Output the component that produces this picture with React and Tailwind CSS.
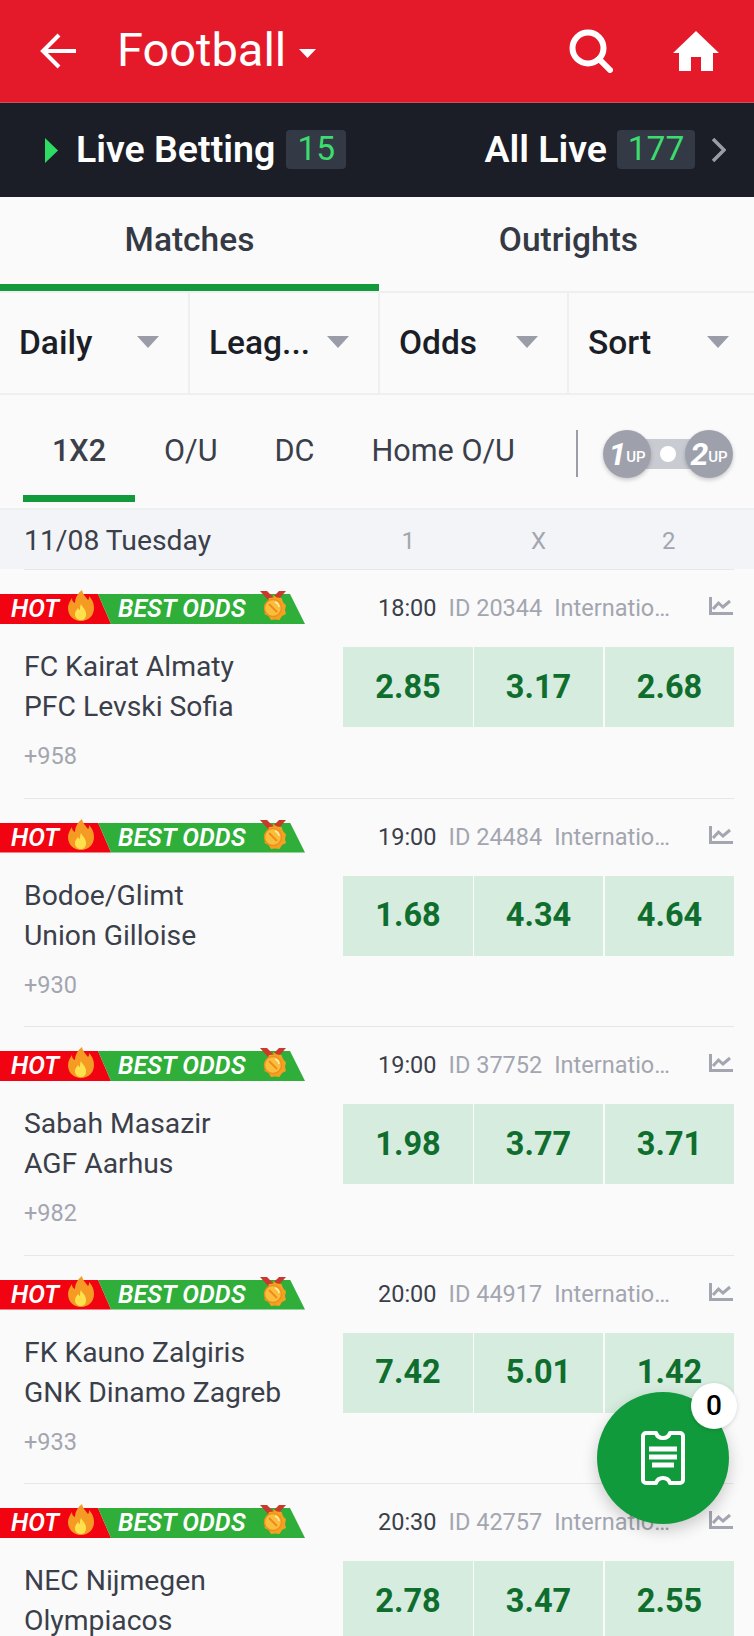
import React from 'react';

const matches = [
  { time: '18:00', id: 'ID 20344', home: 'FC Kairat Almaty', away: 'PFC Levski Sofia', more: '+958', odds: ['2.85', '3.17', '2.68'] },
  { time: '19:00', id: 'ID 24484', home: 'Bodoe/Glimt', away: 'Union Gilloise', more: '+930', odds: ['1.68', '4.34', '4.64'] },
  { time: '19:00', id: 'ID 37752', home: 'Sabah Masazir', away: 'AGF Aarhus', more: '+982', odds: ['1.98', '3.77', '3.71'] },
  { time: '20:00', id: 'ID 44917', home: 'FK Kauno Zalgiris', away: 'GNK Dinamo Zagreb', more: '+933', odds: ['7.42', '5.01', '1.42'] },
  { time: '20:30', id: 'ID 42757', home: 'NEC Nijmegen', away: 'Olympiacos', more: '', odds: ['2.78', '3.47', '2.55'] },
];

function Fire() {
  return (
    <svg viewBox="0 0 26 31" className="w-[26px] h-[31px]">
      <path d="M14 0c1 5 4 7 6 10 1-1 1-2 1-4 3 3 5 7 5 12 0 8-6 13-13 13S0 26 0 18c0-4 2-7 4-10 0 3 1 4 3 5 0-5 3-10 7-13z" fill="#f59a23" />
      <path d="M13 14c1 3 5 5 5 10 0 4-2 6-5 6s-6-2-6-6c0-3 2-4 3-6 1 1 1 2 2 2 0-2 0-4 1-6z" fill="#ffe14d" />
    </svg>
  );
}

function Medal() {
  return (
    <svg viewBox="0 0 28 32" className="w-[28px] h-[32px]">
      <path d="M1 0h7l6 6-4 4zM27 0h-7l-6 6 4 4z" fill="#c9392c" />
      <path d="M14 4l4 2.500 4.500 .5 1.500 4 3 3.500-1 4.500 1 4-4 2-2.500 4-4.500-.5-4 .5-2.500-4-4-2 1-4-1-4.500 3-3.500 1.500-4 4.500-.5z" fill="#f5a020" />
      <circle cx="14" cy="17" r="8.500" fill="#f9bf3c" stroke="#ef8f1e" strokeWidth="1.500" />
      <path d="M10 13l8 8" stroke="#f08a1c" strokeWidth="2" />
      <path d="M16 11a6 6 0 0 1 4 5" stroke="#fdeeb0" strokeWidth="1.500" fill="none" />
    </svg>
  );
}

function Banner() {
  return (
    <div className="relative flex h-[30px] w-[305px] italic font-semibold text-white text-[25px]">
      <div className="w-[111px] bg-[#f20311] pl-[11px] leading-[30px] [clip-path:polygon(0_0,98px_0,100%_100%,0_100%)]">HOT</div>
      <div className="w-[207px] -ml-[13px] bg-[#2fae39] pl-[20px] leading-[30px] whitespace-nowrap [clip-path:polygon(0_0,192px_0,100%_100%,13px_100%)]">BEST ODDS</div>
      <div className="absolute left-[68px] -top-[4px]"><Fire /></div>
      <div className="absolute left-[259px] -top-[3px]"><Medal /></div>
    </div>
  );
}

function MatchRow({ match }) {
  return (
    <div className="h-[228.5px] pt-[24px] ml-[24px] mr-[20px] border-b border-[#e6e7ea]">
      <div className="flex items-center h-[30px] -ml-[24px]">
        <Banner />
        <span className="ml-[73px] text-[23.5px] text-[#3a3f4a]">{match.time}</span>
        <span className="ml-[12px] text-[23.5px] text-[#a3a6b0]">{match.id}</span>
        <span className="ml-[12px] w-[120px] whitespace-nowrap text-[23.5px] text-[#a3a6b0]">Internatio…</span>
        <svg viewBox="0 0 24 18" className="ml-[35px] -mt-[6px] w-[24px] h-[18px]" fill="none" stroke="#a3a6b0" strokeWidth="3">
          <path d="M1.500 0v16.500H24" />
          <path d="M4 12l5.500-6 4.500 4 7-6" />
        </svg>
      </div>
      <div className="flex justify-between mt-[23px]">
        <div className="text-[28.3px] leading-[40px] text-[#3a3f4a]">
          <div>{match.home}</div>
          <div>{match.away}</div>
          <div className="mt-[11px] text-[23.5px] leading-[36px] text-[#a3a6b0]">{match.more}</div>
        </div>
        <div className="flex h-[80px]">
          <div className="w-[130px] flex items-center justify-center bg-[#d6ecdf] text-[#0f6e2d] text-[32.5px] font-bold">{match.odds[0]}</div>
          <div className="w-[129px] ml-[1px] flex items-center justify-center bg-[#d6ecdf] text-[#0f6e2d] text-[32.5px] font-bold">{match.odds[1]}</div>
          <div className="w-[129px] ml-[2px] flex items-center justify-center bg-[#d6ecdf] text-[#0f6e2d] text-[32.5px] font-bold">{match.odds[2]}</div>
        </div>
      </div>
    </div>
  );
}

function FilterCell({ label, last }) {
  return (
    <div className={`flex items-center justify-between pl-[19px] ${last ? 'pr-[25px]' : 'pr-[29px] border-r-2 border-[#eeeff1]'}`}>
      <span className="text-[33.5px] font-medium text-[#1b1e26]">{label}</span>
      <svg viewBox="0 0 22 12" className="w-[22px] h-[12px] -mt-[2px]"><path d="M0 0h22L11 12z" fill="#9a9da8" /></svg>
    </div>
  );
}

export default function App() {
  return (
    <div className="relative h-[1636px] w-[754px] overflow-hidden bg-[#fafafa] font-['Roboto',sans-serif]">
      {/* Header */}
      <header className="flex items-center h-[103px] bg-[#e41a2b] border-b border-[#c9525c] pl-[40px] pr-[35px]">
        <svg viewBox="0 0 36 36" className="w-[36px] h-[36px]" fill="none" stroke="white" strokeWidth="4">
          <path d="M36 18H3M19 2L3 18l16 16" />
        </svg>
        <span className="ml-[41px] -mt-[2px] text-[47px] text-white">Football</span>
        <svg viewBox="0 0 17 9" className="ml-[13px] mt-[5px] w-[17px] h-[9px]"><path d="M0 0h17L8.500 9z" fill="white" /></svg>
        <svg viewBox="0 0 44 44" className="ml-auto w-[44px] h-[44px]" fill="none" stroke="white" strokeWidth="6">
          <circle cx="19" cy="19" r="15.500" />
          <path d="M30 30l11 11" strokeLinecap="round" />
        </svg>
        <svg viewBox="0 0 46 40" className="ml-[60px] w-[46px] h-[40px]" fill="white">
          <path d="M23 0L46 22h-6v18H28V26H18v14H6V22H0z" />
        </svg>
      </header>

      {/* Live bar */}
      <div className="flex items-center h-[94px] bg-[#1b1e26] pl-[45px] pr-[28px]">
        <svg viewBox="0 0 13 25" className="w-[13px] h-[25px]"><path d="M0 0l13 12.500L0 25z" fill="#2fdc63" /></svg>
        <span className="ml-[18px] -mt-[2px] text-[37.5px] font-semibold text-white">Live Betting</span>
        <span className="ml-[11px] -mt-[1px] w-[60px] h-[39px] rounded-[4px] bg-[#333a45] flex items-center justify-center text-[33.5px] text-[#3ddc6e]">15</span>
        <span className="ml-auto -mt-[2px] text-[37.5px] font-semibold text-white">All Live</span>
        <span className="ml-[10px] -mt-[1px] w-[78px] h-[39px] rounded-[4px] bg-[#333a45] flex items-center justify-center text-[33.5px] text-[#3ddc6e]">177</span>
        <svg viewBox="0 0 15 24" className="ml-[16px] w-[15px] h-[24px]" fill="none" stroke="#9b9da6" strokeWidth="3.500">
          <path d="M2 1l11 11L2 23" />
        </svg>
      </div>

      {/* Matches / Outrights */}
      <div className="flex h-[96px] border-b-2 border-[#eeeff1] text-[33.5px] font-medium text-[#343944]">
        <div className="w-[379px] flex items-center justify-center pb-[1px] border-b-[7px] border-[#119a3b] h-[94px]">Matches</div>
        <div className="flex-1 flex items-center justify-center pl-[4px] pb-[8px]">Outrights</div>
      </div>

      {/* Filters */}
      <div className="grid grid-cols-[190px_190px_189px_185px] h-[102px] border-b-2 border-[#eeeff1]">
        <FilterCell label="Daily" />
        <FilterCell label="Leag..." />
        <FilterCell label="Odds" />
        <FilterCell label="Sort" last />
      </div>

      {/* Market tabs */}
      <div className="relative flex items-start h-[115px] pl-[23px] border-b-2 border-[#eeeff1] text-[30.6px] text-[#3a3f4a]">
        <div className="w-[112px] h-[107px] flex justify-center pt-[34px] border-b-[7px] border-[#119a3b] font-medium leading-[44px]">1X2</div>
        <div className="ml-[29px] pt-[34px] leading-[44px]">O/U</div>
        <div className="ml-[57px] pt-[34px] leading-[44px]">DC</div>
        <div className="ml-[57px] pt-[34px] leading-[44px]">Home O/U</div>
        <div className="absolute left-[576px] top-[35px] h-[47px] w-[2px] bg-[#9a9da8]" />
        <div className="absolute left-[603px] top-[35px] flex items-center">
          <div className="relative z-10 w-[48px] h-[48px] rounded-full bg-[#9ea1ac] shadow-[0_2px_4px_rgba(0,0,0,0.2)] flex items-center justify-center text-white">
            <span className="italic font-bold text-[32px] leading-none">1</span>
            <span className="text-[15px] font-medium leading-none mt-[6px]">UP</span>
          </div>
          <div className="-mx-[6px] w-[46px] h-[30px] bg-[#c9cbd2] flex items-center justify-center">
            <div className="w-[16px] h-[16px] rounded-full bg-white" />
          </div>
          <div className="relative z-10 w-[48px] h-[48px] rounded-full bg-[#9ea1ac] shadow-[0_2px_4px_rgba(0,0,0,0.2)] flex items-center justify-center text-white">
            <span className="italic font-bold text-[32px] leading-none">2</span>
            <span className="text-[15px] font-medium leading-none mt-[6px]">UP</span>
          </div>
        </div>
      </div>

      {/* Date header */}
      <div className="flex items-center h-[59px] pt-[3px] bg-[#f3f4f7] pl-[24px] pr-[20px]">
        <span className="text-[28.3px] text-[#3a3f4a]">11/08 Tuesday</span>
        <div className="ml-auto flex w-[391px] text-[24px] text-[#a3a6b0]">
          <span className="flex-1 text-center">1</span>
          <span className="flex-1 text-center">X</span>
          <span className="flex-1 text-center">2</span>
        </div>
      </div>
      <div className="h-[1px] ml-[24px] mr-[20px] bg-[#e6e7ea]" />

      {matches.map((m) => <MatchRow key={m.id} match={m} />)}

      {/* Bet slip button */}
      <div className="absolute left-[597px] top-[1392px] w-[132px] h-[132px] rounded-full bg-[#119a3b] shadow-[0_6px_16px_rgba(0,0,0,0.2)] flex items-center justify-center">
        <svg viewBox="0 0 44 54" className="w-[44px] h-[54px]" fill="none" stroke="white" strokeWidth="4">
          <path d="M5 2h10c1 3 3 5 7 5s6-2 7-5h10a3 3 0 0 1 3 3v44a3 3 0 0 1-3 3H29c-1-3-3-5-7-5s-6 2-7 5H5a3 3 0 0 1-3-3V5a3 3 0 0 1 3-3z" strokeLinejoin="round" />
          <path d="M8 18h28M8 26h28M11 34h22" strokeWidth="5" />
        </svg>
      </div>
      <div className="absolute left-[691px] top-[1383px] w-[46px] h-[46px] rounded-full bg-white shadow-[0_1px_4px_rgba(0,0,0,0.15)] flex items-center justify-center text-[28px] font-medium text-black">0</div>
    </div>
  );
}
